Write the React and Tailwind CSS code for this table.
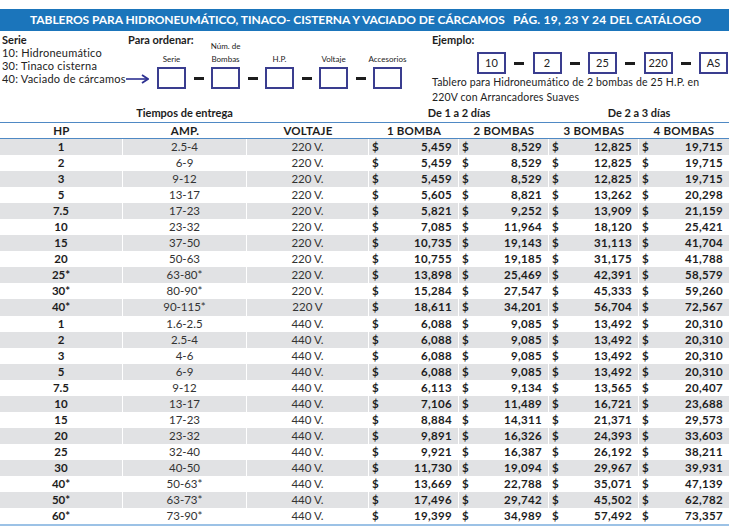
import React from 'react';

const rows = [
  ['1', '2.5-4', '220 V.', '5,459', '8,529', '12,825', '19,715'],
  ['2', '6-9', '220 V.', '5,459', '8,529', '12,825', '19,715'],
  ['3', '9-12', '220 V.', '5,459', '8,529', '12,825', '19,715'],
  ['5', '13-17', '220 V.', '5,605', '8,821', '13,262', '20,298'],
  ['7.5', '17-23', '220 V.', '5,821', '9,252', '13,909', '21,159'],
  ['10', '23-32', '220 V.', '7,085', '11,964', '18,120', '25,421'],
  ['15', '37-50', '220 V.', '10,735', '19,143', '31,113', '41,704'],
  ['20', '50-63', '220 V.', '10,755', '19,185', '31,175', '41,788'],
  ['25*', '63-80*', '220 V.', '13,898', '25,469', '42,391', '58,579'],
  ['30*', '80-90*', '220 V.', '15,284', '27,547', '45,333', '59,260'],
  ['40*', '90-115*', '220 V', '18,611', '34,201', '56,704', '72,567'],
  ['1', '1.6-2.5', '440 V.', '6,088', '9,085', '13,492', '20,310'],
  ['2', '2.5-4', '440 V.', '6,088', '9,085', '13,492', '20,310'],
  ['3', '4-6', '440 V.', '6,088', '9,085', '13,492', '20,310'],
  ['5', '6-9', '440 V.', '6,088', '9,085', '13,492', '20,310'],
  ['7.5', '9-12', '440 V.', '6,113', '9,134', '13,565', '20,407'],
  ['10', '13-17', '440 V.', '7,106', '11,489', '16,721', '23,688'],
  ['15', '17-23', '440 V.', '8,884', '14,311', '21,371', '29,573'],
  ['20', '23-32', '440 V.', '9,891', '16,326', '24,393', '33,603'],
  ['25', '32-40', '440 V.', '9,921', '16,387', '26,192', '38,211'],
  ['30', '40-50', '440 V.', '11,730', '19,094', '29,967', '39,931'],
  ['40*', '50-63*', '440 V.', '13,669', '22,788', '35,071', '47,139'],
  ['50*', '63-73*', '440 V.', '17,496', '29,742', '45,502', '62,782'],
  ['60*', '73-90*', '440 V.', '19,399', '34,989', '57,492', '73,357'],
];

const orderFields = [
  ['Serie'],
  ['Núm. de', 'Bombas'],
  ['H.P.'],
  ['Voltaje'],
  ['Accesorios'],
];

const example = ['10', '2', '25', '220', 'AS'];

const Dash = ({ w }) => (
  <div className={`flex h-[22px] items-center justify-center ${w}`}>
    <div className="h-[3px] w-[10px] bg-[#1d1d1d]" />
  </div>
);

const Money = ({ value, last }) => (
  <div className={`flex w-[90px] items-center justify-between pl-[3px] pr-[6px] font-bold tracking-[0.03em] ${last ? '' : 'border-r border-white'}`}>
    <span>$</span>
    <span>{value}</span>
  </div>
);

export default function App() {
  return (
    <div className="h-[530px] w-[738px] overflow-hidden bg-white font-['Lato',sans-serif] text-[#1d1d1d]">
      <div className="mt-[9px] flex h-[22px] w-[729px] items-center whitespace-nowrap bg-[#1b75bb] pl-[30px] text-[12px] font-bold tracking-[-0.005em] text-white">
        <span className="w-[483px]">TABLEROS PARA HIDRONEUMÁTICO, TINACO- CISTERNA Y VACIADO DE CÁRCAMOS</span>
        <span className="tracking-[0.02em]">PÁG. 19, 23 Y 24 DEL CATÁLOGO</span>
      </div>

      <div className="mt-[2px] flex h-[13px] items-center text-[11px] font-bold leading-[13px]">
        <div className="w-[128px] pl-[2px]">Serie</div>
        <div className="w-[304px]">Para ordenar:</div>
        <div>Ejemplo:</div>
      </div>

      <div className="flex h-[59px]">
        <div className="w-[157px] whitespace-nowrap pl-[2px] text-[11px] leading-[13px] tracking-[0.02em] text-[#222]">
          <div>10: Hidroneumático</div>
          <div>30: Tinaco cisterna</div>
          <div className="flex items-center">
            <span>40: Vaciado de cárcamos</span>
            <svg width="23" height="10" viewBox="0 0 23 10">
              <line x1="0" y1="5" x2="21" y2="5" stroke="#2e3192" strokeWidth="1.6" />
              <path d="M16 1 L22 5 L16 9" fill="none" stroke="#2e3192" strokeWidth="1.8" />
            </svg>
          </div>
        </div>

        <div className="flex w-[275px] items-end pb-[16px]">
          {orderFields.map((label, i) => (
            <React.Fragment key={i}>
              <div className="flex w-[29px] flex-col items-center">
                {label.map((l) => (
                  <div key={l} className="whitespace-nowrap text-[8px] leading-[13px] text-[#222]">{l}</div>
                ))}
                <div className="mt-[1px] h-[22px] w-[29px] border-2 border-[#3a3d8f]" />
              </div>
              {i < orderFields.length - 1 && <Dash w="w-[25px]" />}
            </React.Fragment>
          ))}
        </div>

        <div className="flex flex-col">
          <div className="ml-[45px] mt-[6px] flex">
            {example.map((v, i) => (
              <React.Fragment key={i}>
                <div className="flex h-[22px] w-[29px] items-center justify-center border-2 border-[#3a3d8f] text-[11px] text-[#222]">{v}</div>
                {i < example.length - 1 && <Dash w="w-[26.5px]" />}
              </React.Fragment>
            ))}
          </div>
          <div className="mt-[1px] whitespace-nowrap text-[10.5px] leading-[15px] tracking-[0.015em] text-[#222]">
            <div>Tablero para Hidroneumático de 2 bombas de 25 H.P. en</div>
            <div>220V con Arrancadores Suaves</div>
          </div>
        </div>
      </div>

      <div className="w-[729px]">
        <div className="flex h-[17px] items-center text-[11px] font-bold">
          <div className="w-[369px] text-center">Tiempos de entrega</div>
          <div className="w-[180px] text-center">De 1 a 2 días</div>
          <div className="w-[180px] text-center">De 2 a 3 días</div>
        </div>
        <div className="flex h-[17px] items-center border-y border-[#4f89c4] text-[11.5px] font-bold tracking-[0.02em]">
          <div className="w-[123px] text-center">HP</div>
          <div className="w-[124px] text-center">AMP.</div>
          <div className="w-[122px] text-center">VOLTAJE</div>
          <div className="w-[90px] text-center">1 BOMBA</div>
          <div className="w-[90px] text-center">2 BOMBAS</div>
          <div className="w-[90px] text-center">3 BOMBAS</div>
          <div className="w-[90px] text-center">4 BOMBAS</div>
        </div>
        <div className="border-b-2 border-[#9cc2e6]">
          {rows.map((r, i) => (
            <div key={i} className={`flex h-[16.05px] text-[11.5px] leading-[16px] ${i % 2 === 0 ? 'bg-[#e1e2e4]' : 'bg-white'}`}>
              <div className="w-[123px] border-r border-white text-center font-bold">{r[0]}</div>
              <div className="w-[124px] border-r border-white text-center text-[#333]">{r[1]}</div>
              <div className="w-[122px] border-r border-white text-center text-[#333]">{r[2]}</div>
              <Money value={r[3]} />
              <Money value={r[4]} />
              <Money value={r[5]} />
              <Money value={r[6]} last />
            </div>
          ))}
        </div>
      </div>
    </div>
  );
}
